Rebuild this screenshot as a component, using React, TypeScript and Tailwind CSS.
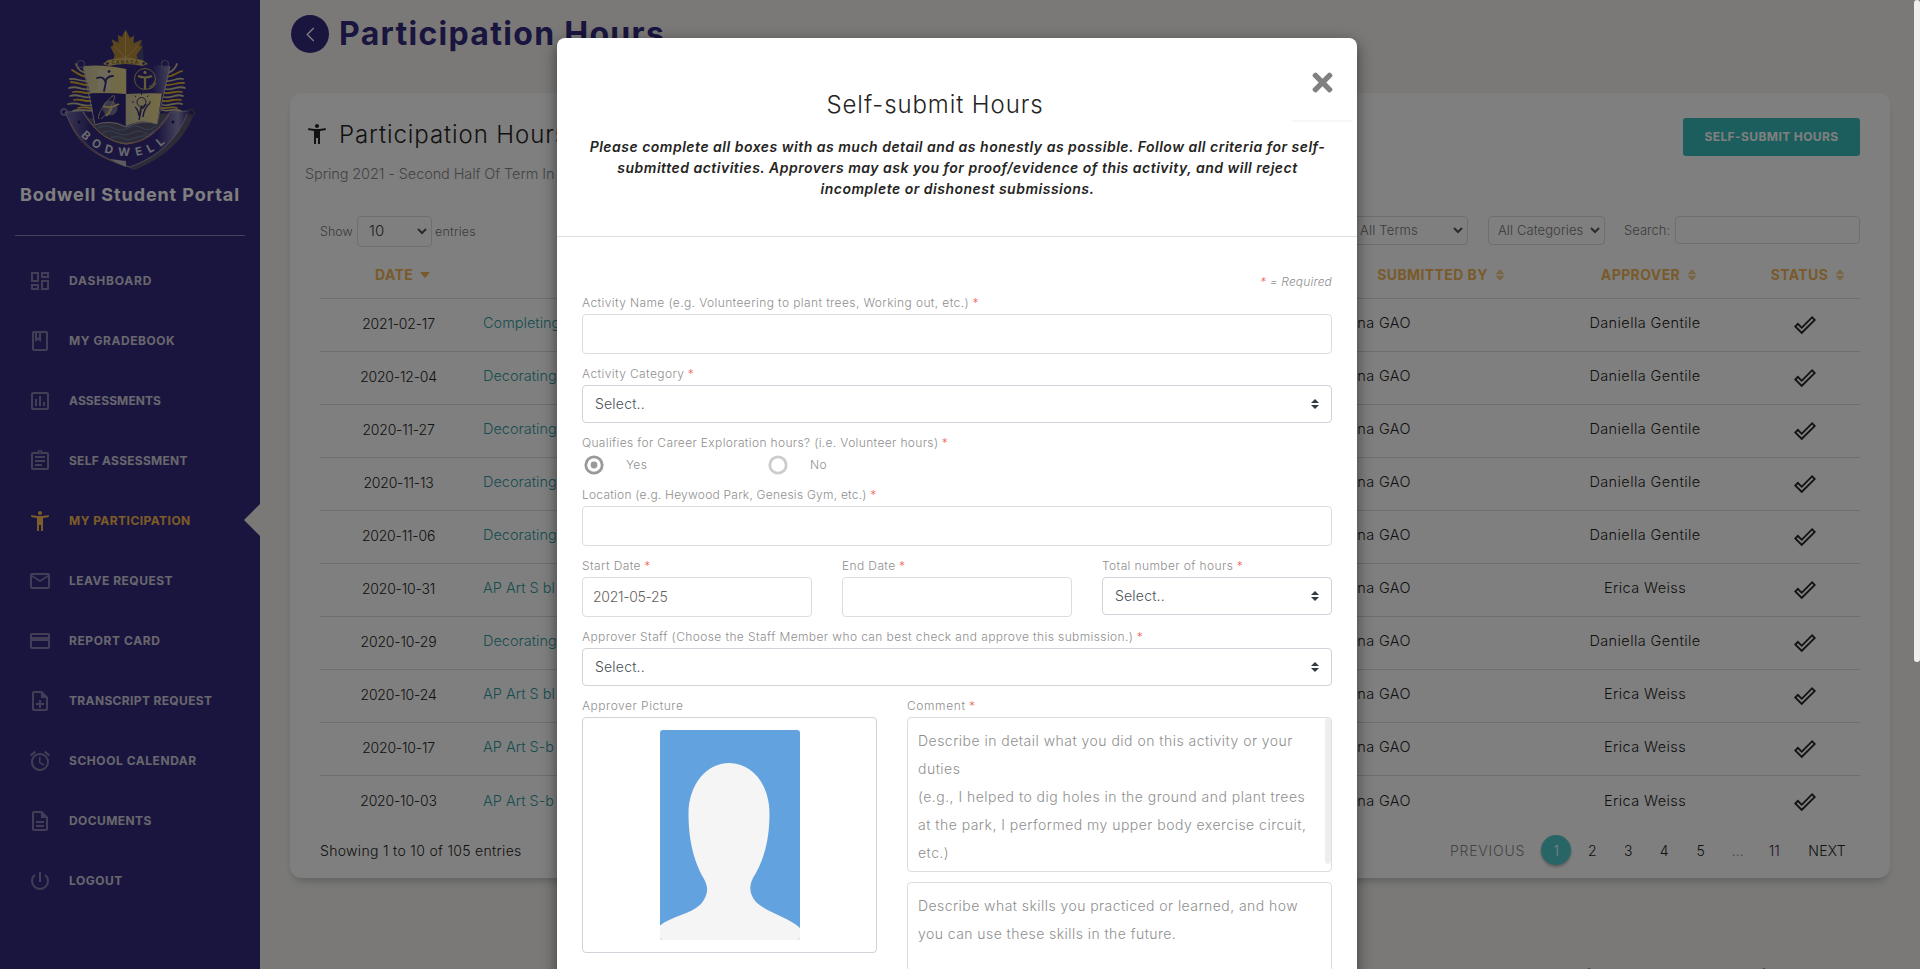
import React from "react";
import {
  MdOutlineDashboard,
  MdOutlineClass,
  MdOutlineAssessment,
  MdOutlineAssignment,
  MdAccessibilityNew,
  MdMailOutline,
  MdCreditCard,
  MdOutlineNoteAdd,
  MdAccessAlarm,
  MdOutlineDescription,
  MdPowerSettingsNew,
  MdDoneOutline,
} from "react-icons/md";
import { FaTimes } from "react-icons/fa";

const menu = [
  { label: "DASHBOARD", icon: MdOutlineDashboard, tracking: "tracking-[0.8px]" },
  { label: "MY GRADEBOOK", icon: MdOutlineClass, tracking: "tracking-[0.55px]" },
  { label: "ASSESSMENTS", icon: MdOutlineAssessment, tracking: "tracking-[0.1px]" },
  { label: "SELF ASSESSMENT", icon: MdOutlineAssignment, tracking: "tracking-[0.25px]" },
  { label: "MY PARTICIPATION", icon: MdAccessibilityNew, tracking: "tracking-[0.45px]", active: true },
  { label: "LEAVE REQUEST", icon: MdMailOutline, tracking: "tracking-[0.5px]" },
  { label: "REPORT CARD", icon: MdCreditCard, tracking: "tracking-[0.6px]" },
  { label: "TRANSCRIPT REQUEST", icon: MdOutlineNoteAdd, tracking: "tracking-[0.35px]" },
  { label: "SCHOOL CALENDAR", icon: MdAccessAlarm, tracking: "tracking-[0.55px]" },
  { label: "DOCUMENTS", icon: MdOutlineDescription, tracking: "tracking-[0.4px]" },
  { label: "LOGOUT", icon: MdPowerSettingsNew, tracking: "tracking-[0.5px]" },
];

const rows = [
  ["2021-02-17", "Completing", "Daniella Gentile"],
  ["2020-12-04", "Decorating", "Daniella Gentile"],
  ["2020-11-27", "Decorating", "Daniella Gentile"],
  ["2020-11-13", "Decorating", "Daniella Gentile"],
  ["2020-11-06", "Decorating", "Daniella Gentile"],
  ["2020-10-31", "AP Art S bl", "Erica Weiss"],
  ["2020-10-29", "Decorating", "Daniella Gentile"],
  ["2020-10-24", "AP Art S bl", "Erica Weiss"],
  ["2020-10-17", "AP Art S-b", "Erica Weiss"],
  ["2020-10-03", "AP Art S-b", "Erica Weiss"],
];

function Crest() {
  return (
    <svg viewBox="0 0 160 160" className="h-40 w-40" fill="none">
      <defs>
        <linearGradient id="cream" x1="0" x2="1">
          <stop offset="0" stopColor="#cfc7a0" />
          <stop offset="1" stopColor="#ead88a" />
        </linearGradient>
        <linearGradient id="navy" x1="0" x2="1">
          <stop offset="0" stopColor="#2f2678" />
          <stop offset=".6" stopColor="#352c80" />
          <stop offset="1" stopColor="#8b86b4" />
        </linearGradient>
        <linearGradient id="band" x1="0" x2="1">
          <stop offset="0" stopColor="#7670a8" />
          <stop offset=".2" stopColor="#352c80" />
          <stop offset=".75" stopColor="#352c80" />
          <stop offset=".92" stopColor="#8a85b4" />
          <stop offset="1" stopColor="#352c80" />
        </linearGradient>
      </defs>
      <path d="M28 99C40 126 60 140 84 150C114 138 134 120 143 96L136 92Z" fill="#5a5670" />
      <path d="M66 16l3 8 8-9 7 8 8-3 2 22-22 2z" fill="#4c4876" />
      <path
        d="M75.500 9.500l4.500 8.500 4-2.500-.5 8 8-4-2 6 3 1.500-6 8 1 3-9 2-3 2-3-2-9-1 1-4-4-8 3-2-2-6 7 4-.5-8 4 2z"
        fill="#b48a3c"
      />
      <path d="M75.500 12v29M75.500 38l-11-12M75.500 38l12-12" stroke="#d9b566" strokeWidth=".8" />
      <g strokeLinecap="round" strokeWidth="1.800">
        <path d="M37 53c-6-1-9-3-11-9M38 61c-7 1-11-3-18-2M40 69c-8 2-12-4-21-1M41 77c-8 2-12-4-21-1M42 85c-9 3-13-4-24-1M44 90c-9 2-13-2-21 1" stroke="#c9bf95" />
        <path d="M38 57c-6 0-10-3-16-7M40 65c-7 1-12-3-19-3M41 73c-7 1-12-3-18-1M42 81c-7 1-12-3-18-1M43 88c-6 1-10-2-15 0" stroke="#e0b02f" />
        <path d="M117 53c5-1 8-4 10-9M116 61c7 1 11-4 17-2M115 69c7 2 12-4 20-1M114 77c7 2 12-4 19-1M113 85c7 2 13-4 19-1M112 90c8 2 13-2 19 1" stroke="#c9bf95" />
        <path d="M116 57c6 0 10-4 16-6M115 65c7 1 12-3 19-2M114 73c7 1 12-3 18-1M113 81c7 1 12-3 18-1M112 88c6 1 10-2 15 0" stroke="#e0b02f" />
      </g>
      <path d="M33 46Q54 44 76 49V74Q58 73 40 73.500Z" fill="url(#cream)" />
      <path d="M76 49Q98 44 120 46L114 73.500Q96 73 76 74Z" fill="url(#navy)" />
      <path d="M40 73.500Q58 73 76 74V106Q60 98 45 104.500Z" fill="#30277a" />
      <path d="M76 74Q96 73 112 73.500L107 104Q92 98 76 106Z" fill="url(#cream)" />
      <path d="M33 46L45 105Q60 99 76 107Q92 99 107 104L120 46" stroke="#bdb6c2" strokeWidth=".9" />
      <path d="M76 49V106" stroke="#c8c0b0" strokeWidth=".6" />
      <circle cx="31" cy="44" r="3.500" stroke="#716b9c" strokeWidth="1.200" />
      <circle cx="115" cy="44" r="3.500" stroke="#716b9c" strokeWidth="1.200" />
      <path d="M53 44l5-4q18-5 34 0l6 4-6 2q-16-4-33 0z" fill="#d1b56b" />
      <circle cx="57.500" cy="43.500" r="1.300" fill="#352c80" />
      <circle cx="93.500" cy="43.500" r="1.300" fill="#352c80" />
      <text x="75.500" y="43.500" textAnchor="middle" fontSize="4.500" fontWeight="700" letterSpacing="1.400" fill="#806522" className="font-['Inter']">
        CANADA
      </text>
      <rect x="48" y="50" width="13" height="20" fill="#dcd6b4" />
      <g stroke="#3a3178" strokeLinecap="round" strokeWidth="1.800">
        <circle cx="59" cy="51.500" r="1" fill="#3a3178" strokeWidth="1" />
        <path d="M47 58q6-2 8 3q3-5 8-5M56 61q-1 6-2 10" />
      </g>
      <g stroke="#cbb768">
        <circle cx="95" cy="59" r="10.500" strokeWidth=".9" />
        <circle cx="95" cy="52.500" r="1.200" fill="#cbb768" />
        <path d="M88 56q7 3 14 0M95 57v12" strokeWidth="2.200" />
        <path d="M99 67q4-1 6-6M99 69q5-1 7-6" strokeWidth="1" />
      </g>
      <circle cx="60" cy="88" r="7.500" fill="#77729c" />
      <path d="M49 99C46 94 60 76 64 75.500C67 77 57 95 51 99" stroke="#c6b987" strokeWidth=".9" />
      <path d="M53 86q7 3 16-2M62 87q-2 6-6 9" stroke="#e0cb77" strokeWidth="1.800" />
      <g stroke="#3a3178" strokeWidth="1">
        <circle cx="91.500" cy="82" r="4.500" />
        <path d="M91.500 75v-2M86 77l-1.500-1.500M97 77l1.500-1.500M84 82h-2M99 82h2" />
        <path d="M85 87q3 2 4 9M92 86q-2 3-2 10M100 83q-6 5-7 14M91 90l-2 10M96 84q-2 3-4 5" strokeWidth="1.500" />
      </g>
      <g stroke="#6b82ac" strokeWidth="1">
        <path d="M48 108q8-4 15 0t15 0 14 0 14-2M52 113q8-4 15 0t15 0 13 0 9-3M60 118q7-3 12 0t13 0 12-2M68 122q8 2 16 0" />
      </g>
      <path
        d="M15 92L33 91C44 110 58 122 76 124C96 122 108 110 120 92L138 91C128 122 104 138 80 147C50 138 28 124 15 92Z"
        fill="url(#band)"
        stroke="#aaa5bd"
        strokeWidth=".8"
      />
      <path d="M33 92C44 112 60 122 76 124C96 122 108 112 119 95" stroke="#c48d5c" strokeWidth="1" />
      <path d="M20 103C32 130 54 139 76 146" stroke="#c48d5c" strokeWidth=".8" />
      <path d="M60 139l16 2v6q-8-3-16-8z" fill="#b9b6c4" />
      <circle cx="14" cy="92" r="3" stroke="#8883ac" strokeWidth="1.300" />
      <circle cx="141" cy="93" r="3.500" stroke="#5b4560" strokeWidth="1.500" />
      <circle cx="29" cy="102" r="1.500" fill="#1f1853" />
      <circle cx="123" cy="102" r="1.500" fill="#1f1853" />
      <path id="motto" d="M29 113C42 130 60 136 80 136C98 136 112 129 127 111" />
      <text fontSize="11.500" fontWeight="700" letterSpacing="6.200" fill="#d6d4de" className="font-['Inter']">
        <textPath href="#motto" startOffset="3">BODWELL</textPath>
      </text>
    </svg>
  );
}

function Sort({ desc }: { desc?: boolean }) {
  return desc ? (
    <svg viewBox="0 0 10 6" className="h-[6px] w-[10px] fill-[#f3b656]">
      <path d="M.8 0h8.400q.8 0 .3.800L5.600 5.500q-.6.700-1.200 0L.5.800Q0 0 .8 0z" />
    </svg>
  ) : (
    <svg viewBox="0 0 10 12" className="h-3 w-[10px] fill-[#f0cd8b]">
      <path d="M5 .2L9.600 5.200H.4zM5 11.800L9.600 6.800H.4z" />
    </svg>
  );
}

function Chevron() {
  return (
    <svg viewBox="0 0 10 7" className="h-[7px] w-[10px] shrink-0" fill="none" stroke="#555" strokeWidth="2">
      <path d="M1 1l4 4 4-4" />
    </svg>
  );
}

function Label({
  children,
  optional,
  tracking = "tracking-[0.39px]",
}: {
  children: React.ReactNode;
  optional?: boolean;
  tracking?: string;
}) {
  return (
    <div className="h-[21px] text-[12px] leading-[20px] whitespace-nowrap text-[#8f8f8f]">
      <span className={tracking}>{children}</span>
      {!optional && <span className="text-[#f0685a]"> *</span>}
    </div>
  );
}

function Select() {
  return (
    <div className="flex h-[38px] items-center justify-between rounded border border-[#ced4da] pr-3 pb-px pl-3 text-[14px] tracking-[0.2px] text-[#495057]">
      Select..
      <svg viewBox="0 0 4 5" className="h-[10px] w-2 fill-[#343a40]">
        <path d="M2 0L0 2h4zm0 5L0 3h4z" />
      </svg>
    </div>
  );
}

function Input({ value }: { value?: string }) {
  return (
    <div className="flex h-10 items-center rounded border border-[#ddd] px-[10px] pb-px text-[14px] tracking-[-0.3px] text-[#66615b]">
      {value}
    </div>
  );
}

function Radio({ on, label }: { on?: boolean; label: string }) {
  return (
    <div className="flex w-[184px] items-center gap-[22px] pl-[2px]">
      <svg viewBox="0 0 20 20" className="h-5 w-5" fill="none">
        <circle cx="10" cy="10" r="8.200" strokeWidth="2.800" className={on ? "stroke-[#999]" : "stroke-[#ccc]"} />
        {on && <circle cx="10" cy="10" r="3.400" fill="#999" />}
      </svg>
      <span className="text-[12px] tracking-[0.3px] text-[#8f8f8f]">{label}</span>
    </div>
  );
}

function Sidebar() {
  return (
    <aside className="relative flex w-[260px] shrink-0 flex-col bg-[#342b7c]">
      <div className="flex justify-center pt-5">
        <Crest />
      </div>
      <div className="mt-[3px] text-center text-[18px] leading-6 font-bold tracking-[0.9px] whitespace-nowrap text-white">
        Bodwell Student Portal
      </div>
      <div className="mx-[15px] mt-[28px] h-px bg-[#8680ae]" />
      <nav className="mt-[15px] flex flex-col">
        {menu.map(({ label, icon: Icon, active, tracking }) => (
          <div
            key={label}
            className={
              active
                ? "flex h-[60px] items-center text-[#f9b950]"
                : "flex h-[60px] items-center text-[#d0cedd]"
            }
          >
            <Icon className={active ? "ml-[28px] h-6 w-6" : "ml-[28px] h-6 w-6 opacity-50"} />
            <span className="ml-[17px] text-[12px] font-bold whitespace-nowrap">
              <span className={tracking}>{label}</span>
            </span>
          </div>
        ))}
      </nav>
      <div className="absolute top-[504px] right-0 h-0 w-0 border-y-[16px] border-r-[16px] border-y-transparent border-r-[#f4f3ef]" />
    </aside>
  );
}

function Card() {
  return (
    <section className="mt-[40px] flex h-[785px] w-[1600px] shrink-0 flex-col rounded-xl bg-white pr-[30px] shadow-[0_6px_10px_-4px_rgba(0,0,0,0.25)]">
      <div className="flex h-[82px] items-center">
        <MdAccessibilityNew className="ml-[15px] h-6 w-6 text-[#252422]" />
        <h2 className="ml-[10px] grow pt-[2px] text-[24px] font-light tracking-[0.9px] text-[#252422]">Participation Hours</h2>
        <button className="mt-[5px] h-[38px] w-[177px] rounded-[3px] bg-[#38bbbb] text-[12px] font-bold tracking-[0.4px] whitespace-nowrap text-white">
          SELF-SUBMIT HOURS
        </button>
      </div>
      <p className="-mt-[8px] ml-[15px] h-[49px] text-[14.500px] leading-[13px] font-light tracking-[-0.1px] text-[#888]">
        Spring 2021 - Second Half Of Term In
      </p>
      <div className="ml-[30px] flex h-[31px] items-start text-[13px] font-light text-[#777]">
        <span className="w-[37px] self-center pt-[2px] text-[12.500px]">Show</span>
        <div className="flex h-[31px] w-[75px] items-center justify-between rounded border border-[#ddd] pr-1 pl-[11px] text-[15px] text-[#444]">
          10
          <Chevron />
        </div>
        <span className="ml-[3px] grow self-center pt-[2px] text-[12.500px] tracking-[0.2px]">entries</span>
        <div className="flex h-[29px] w-[118px] items-center justify-between rounded border border-[#ddd] pr-1 pl-[9px] tracking-[0.2px]">
          All Terms
          <Chevron />
        </div>
        <div className="ml-[20px] flex h-[29px] w-[117px] items-center justify-between rounded border border-[#ddd] pr-1 pl-[9px] tracking-[0.1px] whitespace-nowrap">
          All Categories
          <Chevron />
        </div>
        <span className="ml-[19px] w-[51px] leading-[29px]">Search:</span>
        <div className="h-[28px] w-[185px] rounded border border-[#ddd]" />
      </div>
      <div className="ml-[30px] mt-[4px] grid h-[48px] grid-cols-[157px_858px_212px_196px_1fr] items-center border-b border-[#ddd] text-[14px] font-bold tracking-[0.4px] whitespace-nowrap text-[#f3b656]">
        <div className="flex items-center gap-[7px] pl-[55px]">DATE<Sort desc /></div>
        <div />
        <div className="flex items-center justify-center gap-[7px]">SUBMITTED BY<Sort /></div>
        <div className="flex items-center justify-center gap-[7px] pl-[8px]">APPROVER<Sort /></div>
        <div className="flex items-center justify-center gap-[7px] pl-[13px]">STATUS<Sort /></div>
      </div>
      <div className="ml-[30px] flex flex-col divide-y divide-[#ddd]">
        {rows.map(([date, activity, approver]) => (
          <div
            key={date}
            className="grid h-[53px] grid-cols-[157px_858px_90px_122px_196px_1fr] items-center pb-[4px] text-[14.500px] font-light whitespace-nowrap text-[#252422]"
          >
            <div className="text-center text-[14px] tracking-[-0.2px]">{date}</div>
            <div className="pl-[6px] text-[#2f9ba0]">{activity}</div>
            <div className="pr-[14px] text-right tracking-[0.4px]">na GAO</div>
            <div />
            <div className="text-center tracking-[0.4px]">{approver}</div>
            <div className="flex justify-center pt-[3px] pl-[6px]">
              <MdDoneOutline className="h-[22px] w-[22px]" />
            </div>
          </div>
        ))}
      </div>
      <div className="ml-[30px] mt-[5px] flex h-[32px] items-center justify-between text-[14px] font-light text-[#252422]">
        <span className="tracking-[0.320px]">Showing 1 to 10 of 105 entries</span>
        <div className="flex items-center">
          <span className="tracking-[0.8px] text-[#888]">PREVIOUS</span>
          <span className="ml-[16px] flex h-[30px] w-[30px] items-center justify-center rounded-full bg-[#51cbce] text-white shadow-[0_2px_3px_rgba(0,0,0,0.3)]">1</span>
          <span className="ml-[3px] w-9 text-center">2</span>
          <span className="w-9 text-center">3</span>
          <span className="w-9 text-center">4</span>
          <span className="w-[37px] text-center">5</span>
          <span className="w-[37px] text-center text-[#888]">...</span>
          <span className="w-9 text-center text-[#4b1a50]">11</span>
          <span className="mr-[14px] ml-[16px] tracking-[0.3px]">NEXT</span>
        </div>
      </div>
    </section>
  );
}

function Modal() {
  return (
    <div className="relative flex h-[1100px] w-[800px] flex-col rounded-t-lg bg-white shadow-[0_5px_15px_rgba(0,0,0,0.5)]">
      <header className="h-[199px] border-b border-[#ddd] pt-[51px] text-center text-[#252422]">
        <h3 className="h-8 pr-[44px] text-[24px] leading-8 font-light tracking-[0.9px]">Self-submit Hours</h3>
        <p className="mt-[15px] pl-px text-[14px] leading-[21px] font-semibold tracking-[0.5px] whitespace-nowrap italic">
          Please complete all boxes with as much detail and as honestly as possible. Follow all criteria for self-
          <br />
          submitted activities. Approvers may ask you for proof/evidence of this activity, and will reject
          <br />
          incomplete or dishonest submissions.
        </p>
      </header>
      <FaTimes className="absolute top-[30px] right-[20px] h-[29px] w-[29px] text-[#808080]" />
      <div className="absolute top-[82px] right-[5px] h-[2px] w-[60px] bg-[#f6f6f6]" />
      <div className="flex flex-col px-[25px] pt-[35px] font-light">
        <div className="h-[21px] text-right text-[12px] leading-[20px] tracking-[0.15px] text-[#8f8f8f] italic">
          <span className="text-[#f0685a]">*</span> = Required
        </div>
        <Label>Activity Name (e.g. Volunteering to plant trees, Working out, etc.)</Label>
        <Input />
        <div className="mt-[10px]">
          <Label>Activity Category</Label>
          <Select />
        </div>
        <div className="mt-[10px]">
          <Label tracking="tracking-[0.35px]">Qualifies for Career Exploration hours? (i.e. Volunteer hours)</Label>
          <div className="flex h-[21px] items-center">
            <Radio on label="Yes" />
            <Radio label="No" />
          </div>
        </div>
        <div className="mt-[10px]">
          <Label tracking="tracking-[0.23px]">Location (e.g. Heywood Park, Genesis Gym, etc.)</Label>
          <Input />
        </div>
        <div className="mt-[10px] grid grid-cols-3 gap-[30px]">
          <div>
            <Label>Start Date</Label>
            <Input value="2021-05-25" />
          </div>
          <div>
            <Label>End Date</Label>
            <Input />
          </div>
          <div>
            <Label>Total number of hours</Label>
            <Select />
          </div>
        </div>
        <div className="mt-[10px]">
          <Label>Approver Staff (Choose the Staff Member who can best check and approve this submission.)</Label>
          <Select />
        </div>
        <div className="mt-[10px] flex gap-[30px]">
          <div className="w-[295px]">
            <Label optional tracking="tracking-[0.5px]">Approver Picture</Label>
            <div className="flex h-[236px] justify-center rounded border border-[#ced4da] pt-[12px]">
              <svg viewBox="0 0 140 210" className="h-[210px] w-[140px] rounded-[3px] bg-[#62a2df]">
                <path
                  d="M69 33C47 33 28.500 54 28.500 84C28.500 115 36 135 44 149C49 158 48 165 41 174C31 184 10 187 0 195.500V210H140V198C130 188 106 182 96 172C89 164 89 156 93 148C103 132 109.500 112 109.500 84C109.500 54 92 33 69 33Z"
                  fill="#f5f5f5"
                />
              </svg>
            </div>
          </div>
          <div className="w-[425px]">
            <Label tracking="tracking-[0.6px]">Comment</Label>
            <div className="flex h-[155px] justify-between overflow-hidden rounded border border-[#ddd] pt-[9px] pl-[10px] text-[14px] leading-[28px] whitespace-nowrap text-[#8f8f8f]">
              <div className="tracking-[0.480px]">
                Describe in detail what you did on this activity or your
                <br />
                duties
                <br />
                (e.g., I helped to dig holes in the ground and plant trees
                <br />
                at the park, I performed my upper body exercise circuit,
                <br />
                etc.)
              </div>
              <div className="-mt-[9px] h-[146px] w-[6px] rounded-full bg-[#eee]" />
            </div>
            <div className="mt-[10px] h-[155px] rounded border border-[#ddd] pt-[9px] pl-[10px] text-[14px] leading-[28px] tracking-[0.440px] whitespace-nowrap text-[#8f8f8f]">
              Describe what skills you practiced or learned, and how
              <br />
              you can use these skills in the future.
            </div>
          </div>
        </div>
      </div>
    </div>
  );
}

export default function App() {
  return (
    <div className="relative flex h-[969px] w-[1920px] overflow-hidden bg-[#f4f3ef] font-['Inter',sans-serif]">
      <Sidebar />
      <main className="flex flex-col pl-[30px]">
        <div className="mt-[15px] flex h-[38px] items-center">
          <div className="ml-px flex h-[38px] w-[38px] items-center justify-center rounded-full bg-[#342b7c]">
            <svg viewBox="0 0 9 16" className="h-[15px] w-[9px]" fill="none" stroke="#fff" strokeWidth="1.400">
              <path d="M8 1L1 8l7 7" />
            </svg>
          </div>
          <h1 className="ml-[10px] text-[32px] leading-none font-bold tracking-[1.300px] text-[#342b7c]">Participation Hours</h1>
        </div>
        <Card />
        <footer className="mt-[87px] shrink-0 pr-[30px] text-right text-[13px] font-light text-[#66615b]">
          for a good all-round school of higher learning
        </footer>
      </main>
      <div className="absolute inset-0 flex justify-center bg-black/50 pt-[38px] pr-[6px]">
        <Modal />
      </div>
      <div className="absolute top-0 right-0 h-[662px] w-[6px] rounded-full bg-[#f0f0f0]" />
    </div>
  );
}
